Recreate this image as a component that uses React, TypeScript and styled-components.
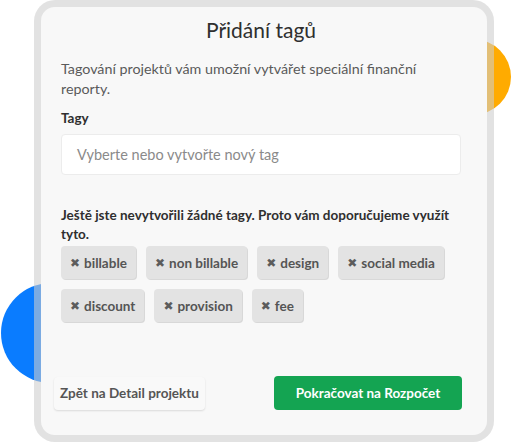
import React from "react";
import styled, { createGlobalStyle } from "styled-components";

const Global = createGlobalStyle`
  html, body { margin: 0; padding: 0; background: #ffffff; }
  body { font-family: Lato, "Noto Sans", sans-serif; }
  * { box-sizing: border-box; }
`;

const Stage = styled.div`
  position: relative;
  width: 511px;
  height: 442px;
  overflow: hidden;
  background: #ffffff;
`;

const Blob = styled.div<{ $color: string; $x: number; $y: number; $r: number }>`
  position: absolute;
  left: ${(p) => p.$x - p.$r}px;
  top: ${(p) => p.$y - p.$r}px;
  width: ${(p) => p.$r * 2}px;
  height: ${(p) => p.$r * 2}px;
  border-radius: 50%;
  background: ${(p) => p.$color};
  z-index: 0;
`;

const Frame = styled.div`
  position: relative;
  z-index: 1;
  margin-left: 34px;
  width: 460px;
  height: 442px;
  border: 7.5px solid rgba(205, 205, 205, 0.58);
  border-radius: 21px;
  background: #f8f8f8;
  background-clip: padding-box;
  display: flex;
  flex-direction: column;
  padding: 0 26px 0 20px;
`;

const Title = styled.h1`
  margin: 8px 0 0;
  font-size: 21px;
  line-height: 30px;
  font-weight: 400;
  color: #2f2f2f;
  text-align: center;
`;

const Lead = styled.p`
  margin: 14px 0 0;
  max-width: 360px;
  font-size: 14.3px;
  line-height: 20px;
  color: #5a5a5a;
`;

const Label = styled.div`
  margin-top: 10px;
  font-size: 13.5px;
  line-height: 18px;
  font-weight: 700;
  color: #2f2f2f;
`;

const Input = styled.div`
  margin-top: 7px;
  height: 41px;
  background: #ffffff;
  border: 1px solid #ececec;
  border-radius: 4px;
  display: flex;
  align-items: center;
  padding: 0 15px;
  font-size: 14.5px;
  color: #8a8a8a;
`;

const Hint = styled.p`
  margin: 31px 0 0;
  font-size: 13.5px;
  line-height: 19px;
  font-weight: 700;
  color: #2f2f2f;
`;

const Tags = styled.div`
  margin-top: 2px;
  display: flex;
  flex-wrap: wrap;
  gap: 10px 10px;
  width: 100%;
`;

const Tag = styled.div`
  height: 33px;
  padding: 0 9px;
  display: inline-flex;
  align-items: center;
  gap: 4px;
  background: #e3e3e3;
  border-radius: 4px;
  box-shadow: 1px 1px 0 #d8d8d8;
  font-size: 13.5px;
  font-weight: 700;
  color: #555555;
`;

const Cross = styled.span`
  font-size: 12px;
  color: #5c5c5c;
  font-family: "DejaVu Sans", sans-serif;
  font-weight: 700;
`;

const Footer = styled.div`
  margin-top: auto;
  margin-bottom: 25px;
  display: flex;
  align-items: center;
  justify-content: space-between;
`;

const BackButton = styled.button`
  margin-left: -7px;
  height: 33px;
  width: 151px;
  border: none;
  border-radius: 4px;
  background: #f9f9f9;
  box-shadow: 0 1px 2px rgba(0, 0, 0, 0.12);
  font-family: inherit;
  font-size: 13.5px;
  font-weight: 700;
  color: #555555;
  padding: 0;
`;

const PrimaryButton = styled.button`
  margin-right: -1px;
  height: 34px;
  width: 188px;
  border: none;
  border-radius: 4px;
  background: #14a452;
  font-family: inherit;
  font-size: 13.5px;
  font-weight: 700;
  color: #ffffff;
  padding: 0;
`;

const tags = ["billable", "non billable", "design", "social media", "discount", "provision", "fee"];

export default function App() {
  return (
    <Stage>
      <Global />
      <Blob $color="#ffab00" $x={473} $y={77} $r={38} />
      <Blob $color="#0a7cff" $x={51} $y={333} $r={50} />
      <Frame>
        <Title>Přidání tagů</Title>
        <Lead>Tagování projektů vám umožní vytvářet speciální finanční reporty.</Lead>
        <Label>Tagy</Label>
        <Input>Vyberte nebo vytvořte nový tag</Input>
        <Hint>Ještě jste nevytvořili žádné tagy. Proto vám doporučujeme využít tyto.</Hint>
        <Tags>
          {tags.map((t) => (
            <Tag key={t}>
              <Cross>✖</Cross>
              {t}
            </Tag>
          ))}
        </Tags>
        <Footer>
          <BackButton>Zpět na Detail projektu</BackButton>
          <PrimaryButton>Pokračovat na Rozpočet</PrimaryButton>
        </Footer>
      </Frame>
    </Stage>
  );
}
